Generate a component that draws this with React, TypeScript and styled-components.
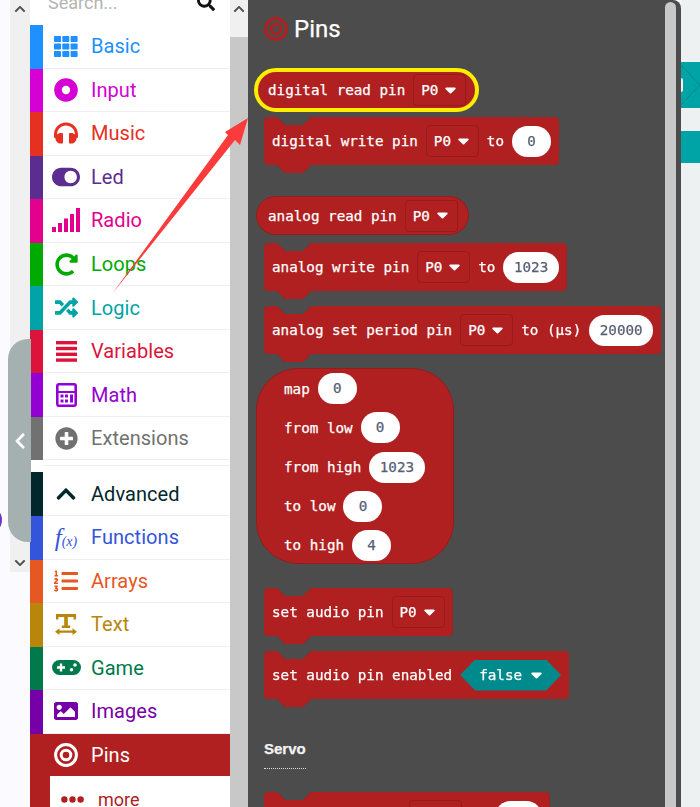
import React from "react";
import styled, { createGlobalStyle } from "styled-components";
import {
  FaChevronLeft,
  FaChevronUp,
  FaChevronDown,
  FaHeadphones,
  FaImage,
  FaListOl,
  FaPlusCircle,
  FaRandom,
  FaRedoAlt,
  FaSearch,
  FaToggleOn,
} from "react-icons/fa";

const FLYOUT = "#4d4c4c";
const PIN_RED = "#b02020";

const GlobalStyle = createGlobalStyle`
  html, body {
    margin: 0;
    padding: 0;
    background: #fbfbff;
    overflow: hidden;
  }
`;

const GridIcon = () => (
  <svg width="24" height="21" viewBox="0 0 24 21" fill="currentColor">
    {[0, 7.5, 15].map((y) =>
      [0, 8.3, 16.6].map((x) => <rect key={`${x}-${y}`} x={x} y={y} width="7" height="6" rx="0.8" />)
    )}
  </svg>
);

const DiscIcon = () => (
  <svg width="24" height="24" viewBox="0 0 24 24">
    <circle cx="12" cy="12" r="8" fill="none" stroke="currentColor" strokeWidth="7.6" />
  </svg>
);

const SignalIcon = () => (
  <svg width="28" height="24" viewBox="0 0 28 24" fill="currentColor">
    <rect x="0" y="19" width="4" height="5" />
    <rect x="6" y="15" width="4" height="9" />
    <rect x="12" y="10.5" width="4" height="13.5" />
    <rect x="18" y="6" width="4" height="18" />
    <rect x="24" y="0" width="4" height="24" />
  </svg>
);

const LinesIcon = () => (
  <svg width="21" height="21" viewBox="0 0 21 21" fill="currentColor">
    <rect y="0" width="21" height="3.4" />
    <rect y="5.8" width="21" height="3.4" />
    <rect y="11.6" width="21" height="3.4" />
    <rect y="17.4" width="21" height="3.4" />
  </svg>
);

const MathIcon = () => (
  <svg width="21" height="24" viewBox="0 0 21 24" fill="currentColor">
    <rect x="1.300" y="1.300" width="18.400" height="21.400" rx="1.600" fill="none" stroke="currentColor" strokeWidth="2.600" />
    <rect x="2" y="8" width="17" height="2" />
    {[11.500, 16.500].map((y) =>
      [4.500, 9].map((x) => <rect key={`${x}-${y}`} x={x} y={y} width="3" height="3" />)
    )}
    <rect x="14" y="11.500" width="3" height="8" />
  </svg>
);

const TextIcon = () => (
  <svg width="22" height="21" viewBox="0 0 22 21" fill="currentColor">
    <path d="M1 0h20v5.5h-2.4V3H12.800v8.500h2.400V14H6.800v-2.500h2.400V3H3.400v2.500H1z" />
    <path d="M0 17.700l4.500-3.500v2.300h13v-2.300l4.500 3.500-4.500 3.300v-2.200h-13V21z" />
  </svg>
);

const GameIcon = () => (
  <svg width="29" height="15" viewBox="0 0 29 15">
    <rect width="29" height="15" rx="7.500" fill="currentColor" />
    <path d="M5 7.500h8M9 3.500v8" stroke="#fff" strokeWidth="2.400" />
    <circle cx="23" cy="5" r="1.800" fill="#fff" />
    <circle cx="19.500" cy="9.800" r="1.800" fill="#fff" />
  </svg>
);

const TargetIcon = ({ size }: { size: number }) => (
  <svg width={size} height={size} viewBox="0 0 24 24" fill="none" stroke="currentColor">
    <circle cx="12" cy="12" r="10.400" strokeWidth="3" />
    <circle cx="12" cy="12" r="4.800" strokeWidth="3" />
  </svg>
);

const DotsIcon = () => (
  <svg width="23" height="7" viewBox="0 0 23 7" fill="currentColor">
    <circle cx="3.400" cy="3.500" r="3.200" />
    <circle cx="11.500" cy="3.500" r="3.200" />
    <circle cx="19.600" cy="3.500" r="3.200" />
  </svg>
);

const Caret = () => (
  <svg width="11" height="7" viewBox="0 0 11 7" fill="#fff">
    <path d="M1.200 0.500h8.600c.8 0 1.200.9.700 1.500L6.200 6.300c-.4.400-1 .4-1.400 0L.5 2c-.5-.6-.1-1.500.7-1.500z" />
  </svg>
);

function FunctionGlyph({ children }: { children: React.ReactNode }) {
  return <FunctionText>{children}</FunctionText>;
}

const categories: { label: string; color: string; icon: React.ReactNode }[] = [
  { label: "Basic", color: "#1e90ff", icon: <GridIcon /> },
  { label: "Input", color: "#d400d4", icon: <DiscIcon /> },
  { label: "Music", color: "#e63022", icon: <FaHeadphones size={24} /> },
  { label: "Led", color: "#5c2d91", icon: <FaToggleOn size={28} /> },
  { label: "Radio", color: "#e3008c", icon: <SignalIcon /> },
  { label: "Loops", color: "#00aa00", icon: <FaRedoAlt size={23} /> },
  { label: "Logic", color: "#00a4a6", icon: <FaRandom size={23} /> },
  { label: "Variables", color: "#dc143c", icon: <LinesIcon /> },
  { label: "Math", color: "#9400d3", icon: <MathIcon /> },
  { label: "Extensions", color: "#717171", icon: <FaPlusCircle size={23} /> },
];

const advanced: { label: string; color: string; icon: React.ReactNode }[] = [
  { label: "Advanced", color: "#00272b", icon: <FaChevronUp size={22} /> },
  {
    label: "Functions",
    color: "#3455db",
    icon: (
      <FunctionGlyph>
        f<small>(x)</small>
      </FunctionGlyph>
    ),
  },
  { label: "Arrays", color: "#e65722", icon: <FaListOl size={24} /> },
  { label: "Text", color: "#b8860b", icon: <TextIcon /> },
  { label: "Game", color: "#007a4b", icon: <GameIcon /> },
  { label: "Images", color: "#7600a8", icon: <FaImage size={24} /> },
];

const App: React.FC = () => {
  return (
    <Page>
      <GlobalStyle />
      <Gutter />
      <LeftRail>
        <FaChevronUp size={12} />
        <FaChevronDown size={12} />
      </LeftRail>
      <Toolbox>
        <SearchRow>
          <SearchText>Search...</SearchText>
          <FaSearch size={18} color="#111" />
        </SearchRow>
        {categories.map((c) => (
          <Row key={c.label} $color={c.color}>
            <Strip $color={c.color} />
            <RowBody>
              <IconCell>{c.icon}</IconCell>
              <Label>{c.label}</Label>
            </RowBody>
          </Row>
        ))}
        <GroupGap />
        {advanced.map((c) => (
          <Row key={c.label} $color={c.color}>
            <Strip $color={c.color} />
            <RowBody>
              <IconCell>{c.icon}</IconCell>
              <Label>{c.label}</Label>
            </RowBody>
          </Row>
        ))}
        <ActiveRow>
          <IconCell>
            <TargetIcon size={24} />
          </IconCell>
          <Label>Pins</Label>
        </ActiveRow>
        <MoreRow>
          <MoreStrip />
          <MoreIcon>
            <DotsIcon />
          </MoreIcon>
          <MoreLabel>more</MoreLabel>
        </MoreRow>
      </Toolbox>
      <ToolboxScroll>
        <ScrollCap>
          <FaChevronUp size={12} />
        </ScrollCap>
        <ScrollThumb />
      </ToolboxScroll>
      <Flyout>
        <FlyoutTitle>
          <TitleIcon>
            <TargetIcon size={24} />
          </TitleIcon>
          Pins
        </FlyoutTitle>

        <Reporter $highlight>
          <span>digital read pin</span>
          <Dropdown>P0<Caret /></Dropdown>
        </Reporter>

        <Statement $top={5}>
          <StatementBody>
            <span>digital write pin</span>
            <Dropdown>P0<Caret /></Dropdown>
            <span>to</span>
            <Value>0</Value>
          </StatementBody>
        </Statement>

        <Reporter $top={23}>
          <span>analog read pin</span>
          <Dropdown>P0<Caret /></Dropdown>
        </Reporter>

        <Statement $top={8}>
          <StatementBody>
            <span>analog write pin</span>
            <Dropdown>P0<Caret /></Dropdown>
            <span>to</span>
            <Value>1023</Value>
          </StatementBody>
        </Statement>

        <Statement $top={7}>
          <StatementBody>
            <span>analog set period pin</span>
            <Dropdown>P0<Caret /></Dropdown>
            <span>to (µs)</span>
            <Value>20000</Value>
          </StatementBody>
        </Statement>

        <MapBlock>
          <MapRow><span>map</span><Value>0</Value></MapRow>
          <MapRow><span>from low</span><Value>0</Value></MapRow>
          <MapRow><span>from high</span><Value>1023</Value></MapRow>
          <MapRow><span>to low</span><Value>0</Value></MapRow>
          <MapRow><span>to high</span><Value>4</Value></MapRow>
        </MapBlock>

        <Statement $top={24}>
          <StatementBody>
            <span>set audio pin</span>
            <Dropdown>P0<Caret /></Dropdown>
          </StatementBody>
        </Statement>

        <Statement $top={7}>
          <StatementBody>
            <span>set audio pin enabled</span>
            <BoolField>false<Caret /></BoolField>
          </StatementBody>
        </Statement>

        <SectionLabel>Servo</SectionLabel>
        <SectionRule />

        <Statement $top={23}>
          <StatementBody>
            <span>servo write pin</span>
            <Dropdown>P0<Caret /></Dropdown>
            <span>to</span>
            <Value>180</Value>
          </StatementBody>
        </Statement>

        <FlyoutScrollbar />
      </Flyout>
      <Workspace>
        <CanvasBlock $top={62} $height={46}>
          <svg width="19" height="46" viewBox="0 0 19 46" fill="none" stroke="#008a8c">
            <path d="M0 3l19 20L0 43" />
          </svg>
          <CanvasKnob />
        </CanvasBlock>
        <CanvasBlock $top={131} $height={32} />
      </Workspace>
      <Arrow width="150" height="190" viewBox="0 0 150 190">
        <polygon points="12,184 128,25 125,22 148,8 140,35 135,30" fill="#fb3b3b" />
      </Arrow>
      <Flap>
        <FaChevronLeft size={18} color="#fff" />
      </Flap>
      <EdgeDot />
    </Page>
  );
};

const Page = styled.div`
  position: relative;
  display: flex;
  align-items: flex-start;
  width: 700px;
  height: 807px;
  overflow: hidden;
  background: #fbfbff;
  font-family: Roboto, "Liberation Sans", sans-serif;
`;

const Gutter = styled.div`
  width: 10px;
  flex: none;
`;

const LeftRail = styled.div`
  flex: none;
  display: flex;
  flex-direction: column;
  align-items: center;
  justify-content: space-between;
  box-sizing: border-box;
  width: 20px;
  height: 572px;
  padding: 3px 0 3px;
  background: #f0f0f0;
  color: #505050;
`;

const Toolbox = styled.div`
  flex: none;
  width: 200px;
  height: 807px;
  overflow: hidden;
  background: #fff;
`;

const SearchRow = styled.div`
  display: flex;
  align-items: center;
  justify-content: space-between;
  box-sizing: border-box;
  height: 36px;
  margin-top: -11px;
  padding: 0 15px 10px 18px;
`;

const SearchText = styled.span`
  font-size: 18px;
  color: #b4b4b4;
`;

const Row = styled.div<{ $color: string }>`
  display: flex;
  height: 43.55px;
  color: ${(p) => p.$color};
`;

const Strip = styled.div<{ $color: string }>`
  flex: none;
  width: 13px;
  background: ${(p) => p.$color};
`;

const RowBody = styled.div`
  flex: 1;
  display: flex;
  align-items: center;
  box-sizing: border-box;
  border-bottom: 1px solid #eef1f1;
`;

const IconCell = styled.div`
  flex: none;
  display: flex;
  align-items: center;
  justify-content: center;
  width: 46px;
  margin-right: 2px;
`;

const Label = styled.span`
  font-size: 20px;
  letter-spacing: 0.05px;
`;

const FunctionText = styled.span`
  font-family: "Liberation Serif", serif;
  font-style: italic;
  font-size: 25px;
  line-height: 1;

  small {
    font-size: 14px;
  }
`;

const GroupGap = styled.div`
  box-sizing: border-box;
  height: 12px;
  margin-left: 13px;
  padding-top: 5px;
  border-bottom: 6px solid #fff;
  background: #e9eeee;
  background-clip: content-box;
`;

const ActiveRow = styled.div`
  display: flex;
  align-items: center;
  height: 42.5px;
  padding-left: 13px;
  background: ${PIN_RED};
  color: #fff;
`;

const MoreRow = styled.div`
  display: flex;
  align-items: center;
  height: 46px;
  color: ${PIN_RED};
`;

const MoreStrip = styled.div`
  flex: none;
  align-self: stretch;
  width: 20px;
  background: ${PIN_RED};
`;

const MoreIcon = styled.div`
  display: flex;
  width: 48px;
  padding-left: 11px;
  box-sizing: border-box;
`;

const MoreLabel = styled.span`
  font-size: 18px;
`;

const ToolboxScroll = styled.div`
  flex: none;
  width: 18px;
  height: 807px;
  display: flex;
  flex-direction: column;
  background: #f0f0f0;
`;

const ScrollCap = styled.div`
  height: 37px;
  padding-top: 3px;
  box-sizing: border-box;
  display: flex;
  justify-content: center;
  color: #505050;
`;

const ScrollThumb = styled.div`
  flex: 1;
  background: #c8c8c8;
`;

const Flyout = styled.div`
  position: relative;
  z-index: 2;
  flex: none;
  box-sizing: border-box;
  width: 433px;
  height: 807px;
  overflow: hidden;
  padding-left: 8px;
  background: ${FLYOUT};
  border-top-right-radius: 8px;
  color: #fff;
  font-family: "DejaVu Sans Mono", "Liberation Mono", monospace;
  font-size: 14.25px;
  -webkit-text-stroke: 0.25px currentColor;
`;

const FlyoutTitle = styled.div`
  display: flex;
  align-items: center;
  height: 30px;
  padding: 14px 0 24px 8px;
  font-family: Roboto, "Liberation Sans", sans-serif;
  font-size: 24px;
`;

const TitleIcon = styled.span`
  display: flex;
  margin-right: 6px;
  color: ${PIN_RED};
`;

const Reporter = styled.div<{ $top?: number; $highlight?: boolean }>`
  display: flex;
  align-items: center;
  gap: 8px;
  box-sizing: border-box;
  width: fit-content;
  height: ${(p) => (p.$highlight ? 44 : 39)}px;
  margin-top: ${(p) => p.$top ?? 0}px;
  margin-left: ${(p) => (p.$highlight ? -2 : 0)}px;
  padding: 0 ${(p) => (p.$highlight ? 9 : 10)}px 0 ${(p) => (p.$highlight ? 10 : 11)}px;
  border: ${(p) => (p.$highlight ? "4px solid #ffee00" : "1px solid #951c1c")};
  border-radius: 22px;
  background: ${PIN_RED};
`;

const Statement = styled.div<{ $top?: number }>`
  width: fit-content;
  margin-top: ${(p) => p.$top ?? 0}px;
  margin-left: 8px;
  filter: drop-shadow(0 0 0.6px #86191a);
`;

const StatementBody = styled.div`
  display: flex;
  align-items: center;
  gap: 8px;
  box-sizing: border-box;
  height: 56px;
  padding: 0 8px 8px;
  background: ${PIN_RED};
  clip-path: polygon(
    3px 0, 13px 0, 21px 8px, 39px 8px, 47px 0, calc(100% - 3px) 0, 100% 3px,
    100% calc(100% - 11px), calc(100% - 3px) calc(100% - 8px), 47px calc(100% - 8px),
    39px 100%, 21px 100%, 13px calc(100% - 8px), 3px calc(100% - 8px), 0 calc(100% - 11px), 0 3px
  );
`;

const Dropdown = styled.div`
  display: flex;
  align-items: center;
  justify-content: space-between;
  box-sizing: border-box;
  width: 53px;
  height: 32px;
  padding: 0 9px 0 7px;
  border: 1px solid #941c1c;
  border-radius: 4px;
`;

const Value = styled.div`
  min-width: 39px;
  height: 31px;
  box-sizing: border-box;
  padding: 0 10.5px;
  border-radius: 16px;
  background: #fff;
  color: #575e75;
  line-height: 31px;
  text-align: center;
`;

const BoolField = styled.div`
  display: flex;
  align-items: center;
  gap: 9px;
  height: 31px;
  padding: 0 19px;
  background: #008a8c;
  clip-path: polygon(15px 0, calc(100% - 15px) 0, 100% 50%, calc(100% - 15px) 100%, 15px 100%, 0 50%);
`;

const MapBlock = styled.div`
  display: flex;
  flex-direction: column;
  justify-content: center;
  gap: 8.2px;
  box-sizing: border-box;
  width: 198px;
  height: 196px;
  margin-top: 6px;
  padding: 2px 0 0 27px;
  border: 1px solid #951c1c;
  border-radius: 42px;
  background: ${PIN_RED};
`;

const MapRow = styled.div`
  display: flex;
  align-items: center;
  gap: 8px;
`;

const SectionLabel = styled.div`
  margin: 33px 0 0 8px;
  font-family: "Liberation Sans", sans-serif;
  font-size: 15px;
  font-weight: 700;
  line-height: 18px;
  color: #f4f4f4;
`;

const SectionRule = styled.div`
  width: 42px;
  margin: 10px 0 0 8px;
  border-top: 1px dotted #ddd;
`;

const FlyoutScrollbar = styled.div`
  position: absolute;
  top: 2px;
  bottom: 0;
  right: 5px;
  width: 11px;
  border-radius: 6px 6px 0 0;
  background: #c8c8c8;
`;

const Workspace = styled.div`
  position: relative;
  flex: 1;
  height: 807px;
  background: #edf1f2;
`;

const CanvasBlock = styled.div<{ $top: number; $height: number }>`
  position: absolute;
  left: 0;
  right: 0;
  top: ${(p) => p.$top}px;
  height: ${(p) => p.$height}px;
  background: #00a4a6;
`;

const CanvasKnob = styled.div`
  position: absolute;
  left: 0;
  top: 16px;
  width: 2px;
  height: 14px;
  border-radius: 0 3px 3px 0;
  background: #f4f4f4;
`;

const Arrow = styled.svg`
  position: absolute;
  z-index: 1;
  left: 100px;
  top: 110px;
`;

const Flap = styled.div`
  position: absolute;
  z-index: 3;
  left: 8px;
  top: 339px;
  display: flex;
  align-items: center;
  justify-content: center;
  width: 23px;
  height: 203px;
  border-radius: 20px 0 0 20px;
  background: #a5b1b1;
`;

const EdgeDot = styled.div`
  position: absolute;
  left: -6px;
  top: 512px;
  width: 8px;
  height: 16px;
  border-radius: 50%;
  background: #6a35c8;
`;

export default App;
